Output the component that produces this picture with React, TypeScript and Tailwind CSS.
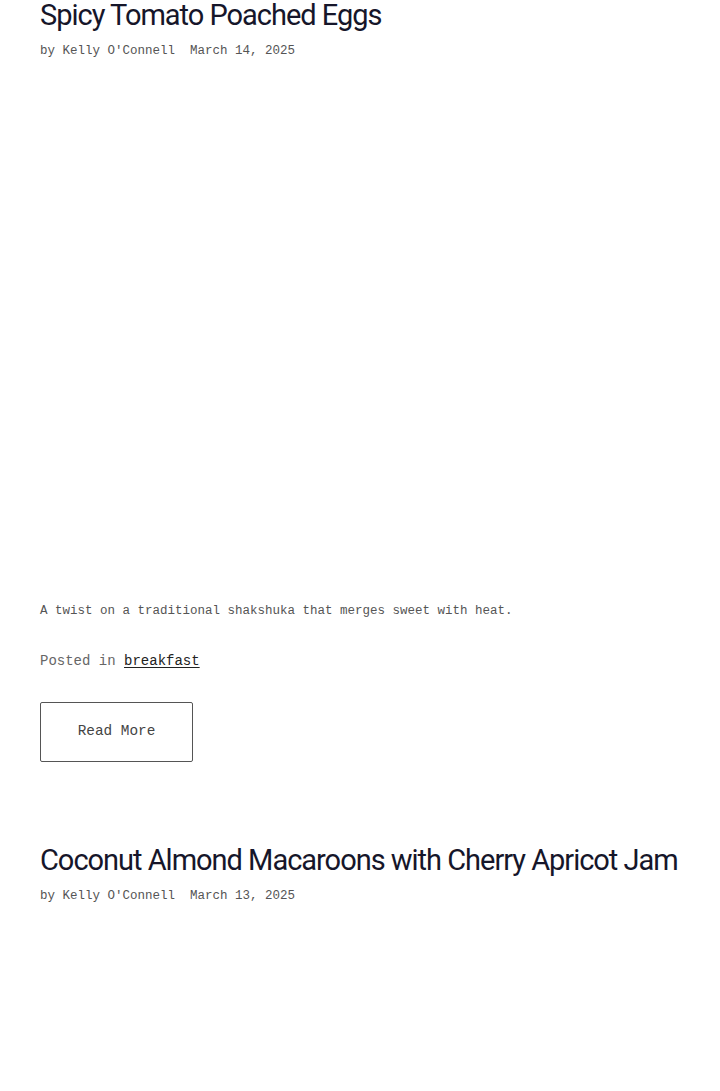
import React from 'react';

interface Post {
  title: string;
  author: string;
  date: string;
  excerpt?: string;
  category?: string;
}

const posts: Post[] = [
  {
    title: 'Spicy Tomato Poached Eggs',
    author: "Kelly O'Connell",
    date: 'March 14, 2025',
    excerpt: 'A twist on a traditional shakshuka that merges sweet with heat.',
    category: 'breakfast',
  },
  {
    title: 'Coconut Almond Macaroons with Cherry Apricot Jam',
    author: "Kelly O'Connell",
    date: 'March 13, 2025',
  },
];

const mono = { fontFamily: '"Liberation Mono", "Courier New", monospace' };
const heading = { fontFamily: 'Roboto, "Noto Sans", sans-serif' };

function PostCard({ post }: { post: Post }) {
  return (
    <article className="mb-[80px]">
      <h2
        style={heading}
        className="whitespace-nowrap text-[29px] leading-[36px] font-normal tracking-[-0.035em] text-[#16162a]"
      >
        {post.title}
      </h2>
      <p style={mono} className="mt-[8px] text-[12.5px] leading-[20px] text-[#555]">
        <span>by {post.author}</span>
        <span className="ml-[15px]">{post.date}</span>
      </p>

      {/* Featured image (not loaded) */}
      <div className="mt-[19px] mb-[21px] h-[500px] bg-white" />

      {post.excerpt && (
        <>
          <p style={mono} className="text-[12.5px] leading-[20px] text-[#555]">
            {post.excerpt}
          </p>
          <p style={mono} className="mt-[28px] text-[14px] leading-[24px] text-[#666]">
            Posted in{' '}
            <a href="#" className="text-[#222] underline underline-offset-2">
              {post.category}
            </a>
          </p>
          <button
            style={mono}
            className="mt-[29px] flex h-[60px] w-[153px] items-center justify-center rounded-[2px] border border-[#555] bg-white text-[14.4px] text-[#444]"
          >
            Read More
          </button>
        </>
      )}
    </article>
  );
}

export default function App() {
  return (
    <div className="min-h-screen bg-white">
      <main className="-mt-[3px] px-10">
        {posts.map((post) => (
          <PostCard key={post.title} post={post} />
        ))}
      </main>
    </div>
  );
}
